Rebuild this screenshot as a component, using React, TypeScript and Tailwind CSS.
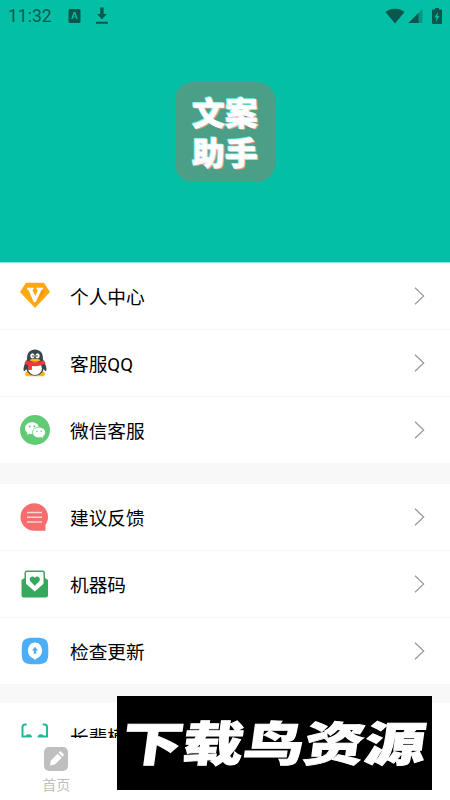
import type { ReactNode } from "react";

/* Status bar glyphs */

function StatusBar() {
  return (
    <div className="flex h-8 items-center justify-between pl-2 pr-2 text-[#0b574d]">
      <div className="flex items-center">
        <span className="w-[60px] font-[Roboto,sans-serif] text-[17.500px] leading-8">11:32</span>
        <svg width="13" height="14" viewBox="0 0 13 14" fill="currentColor">
          <path
            fillRule="evenodd"
            d="M2 0h9a1.500 1.500 0 0 1 1.500 1.500v11A1.500 1.500 0 0 1 11 14H2A1.500 1.500 0 0 1 .5 12.500v-11A1.500 1.500 0 0 1 2 0ZM5.600 3 3.200 10h1.400l.5-1.500h2.800L8.400 10h1.400L7.400 3ZM6.500 4.600l.9 2.800H5.600Z"
          />
        </svg>
        <svg className="ml-[14px]" width="14" height="18" viewBox="0 0 14 18" fill="currentColor">
          <path d="M5.200 .5h3.400v6.500h3.200L7 12.500 2.200 7h3ZM1 14.800h12v1.900H1Z" />
        </svg>
      </div>
      <div className="flex items-center">
        <svg width="20" height="16" viewBox="0 0 20 16" fill="currentColor">
          <path d="M10 15.500.5 4C5.500-.5 14.500-.5 19.500 4Z" />
        </svg>
        <svg className="ml-[3px]" width="15" height="14" viewBox="0 0 15 14" fill="currentColor">
          <path d="M14.500 0v14H.5Z" opacity=".4" />
          <path d="M10.500 4v10H.5Z" />
        </svg>
        <svg className="ml-[9px]" width="10" height="16" viewBox="0 0 10 16">
          <path fill="currentColor" d="M3 0h4v1.500h2A1 1 0 0 1 10 2.500V15a1 1 0 0 1-1 1H1a1 1 0 0 1-1-1V2.500a1 1 0 0 1 1-1h2Z" />
          <path fill="#02bfa6" d="M6 4 2.500 9.500h2L3.800 14l3.700-6h-2Z" />
        </svg>
      </div>
    </div>
  );
}

/* Row icons */

function VipIcon() {
  return (
    <svg width="30" height="30" viewBox="0 0 30 30">
      <path fill="#ffa70f" d="M6 1.800h18l6 9.200-15 16L0 11Z" />
      <path fill="#f28c0c" d="m22.300 8 2.700 3L15 23l-1-3Z" opacity=".6" />
      <path
        fill="#fff"
        d="M7 6.800h6.500v1.500l-1.200.5 3 6.200 2.700-6-1.500-.7V6.800H23v1.500l-1.600.7-5.600 12.200h-2L8.500 9 7 8.300Z"
      />
    </svg>
  );
}

function QQIcon() {
  return (
    <svg width="30" height="30" viewBox="0 0 30 30">
      <path fill="#ffb711" d="M8.500 23c-4 .5-5 4.800-1 5.200h15c4-.4 3-4.700-1-5.200Z" />
      <path
        fill="#37464f"
        d="M15 1.500c-5 0-7.900 3.600-7.900 8.200 0 1.600-.2 2.500-1.100 4-1.700 2.800-2.900 6.300-2.400 8.800.3 1.300 1.700.1 2.700-1.500C7.500 25.500 11 27.500 15 27.500s7.500-2 8.700-6.500c1 1.600 2.400 2.800 2.700 1.500.5-2.500-.7-6-2.400-8.800-.9-1.500-1.100-2.400-1.100-4 0-4.600-2.900-8.200-7.900-8.200Z"
      />
      <ellipse cx="15" cy="20.500" rx="7" ry="6.500" fill="#fff" />
      <path fill="#eb3a3b" d="M6 12.300c5 2.600 13 2.600 18 0l1.600 3.200c-4.100 2.200-8.900 3-13.600 2.500l-.2 4H7.800l.2-5c-1.300-.4-2.400-.9-3.600-1.600Z" />
      <ellipse cx="12.400" cy="7.800" rx="2.100" ry="2.600" fill="#fff" />
      <ellipse cx="17.600" cy="7.800" rx="2.100" ry="2.600" fill="#fff" />
      <circle cx="13" cy="8" r=".8" fill="#263238" />
      <circle cx="17" cy="8" r=".8" fill="#263238" />
      <path fill="#ffb711" d="M9.500 12.200c2.500-1.800 8.500-1.800 11 0-2.500 2.100-8.500 2.100-11 0Z" />
    </svg>
  );
}

function WechatIcon() {
  return (
    <svg width="30" height="30" viewBox="0 0 30 30">
      <circle cx="15" cy="15" r="15" fill="#60ca75" />
      <path fill="#fff" d="M12 7.300c-4 0-7 2.700-7 6 0 1.900 1 3.500 2.600 4.600L7 20l2.500-1.300c.8.200 1.600.3 2.500.3 3.900 0 7-2.500 7-5.800s-3.100-5.900-7-5.900Z" />
      <path
        fill="#fff"
        stroke="#60ca75"
        strokeWidth=".8"
        d="M19 12.200c-3.600 0-6.500 2.300-6.500 5.300s2.900 5.400 6.500 5.400c.8 0 1.500-.1 2.200-.3l2.300 1.200-.6-2c1.600-1 2.600-2.500 2.600-4.300 0-3-2.900-5.300-6.500-5.300Z"
      />
      <g fill="#60ca75">
        <circle cx="9.700" cy="11.500" r="1" />
        <circle cx="14.300" cy="11.500" r="1" />
        <circle cx="17" cy="16.200" r=".8" />
        <circle cx="21.200" cy="16.200" r=".8" />
      </g>
    </svg>
  );
}

function FeedbackIcon() {
  return (
    <svg width="30" height="30" viewBox="0 0 30 30">
      <path fill="#f66d6d" d="M14.300 1.200a13.700 13.700 0 0 1 13.700 13.700c0 3-1 5.500-2.500 7.800L25.500 28c0 .5-.3.800-.8.800H14.300a13.800 13.800 0 0 1 0-27.600Z" />
      <path stroke="#ffd4d4" strokeWidth="1.600" d="M7 10.500h15M7 15.300h15M7 20h15" />
    </svg>
  );
}

function MachineIcon() {
  return (
    <svg width="30" height="30" viewBox="0 0 30 30">
      <path
        fill="#37a95f"
        d="M6.500 1.500h16a2.500 2.500 0 0 1 2.500 2.500v5l3 2v15.500a2 2 0 0 1-2 2H3.500a2 2 0 0 1-2-2V11l3-2V4a2.500 2.500 0 0 1 2-2.500Z"
      />
      <path fill="#fff" d="M7.500 3h14.800a1.200 1.200 0 0 1 1.200 1.200v10.500L14.800 22.500 6 14.700V4.200A1.200 1.200 0 0 1 7.500 3Z" />
      <path fill="#37a95f" d="M14.800 16.700 10.500 12.500c-1.500-1.600-.7-4.900 1.900-4.900 1.200 0 1.900.6 2.400 1.200.5-.6 1.200-1.200 2.400-1.200 2.600 0 3.400 3.300 1.900 4.900Z" />
    </svg>
  );
}

function UpdateIcon() {
  return (
    <svg width="30" height="30" viewBox="0 0 30 30">
      <path fill="#4daef8" d="M15 1.700c11.500 0 13.300 1.800 13.300 13.300S26.500 28.300 15 28.300 1.700 26.500 1.700 15 3.500 1.700 15 1.700Z" />
      <path fill="#fff" d="M15 6.500c4 0 7 3.300 7 8 0 4.200-2.500 7-5.200 7.800L15 24l-1.800-1.700C10.500 21.500 8 18.700 8 14.500c0-4.700 3-8 7-8Z" />
      <path fill="#4daef8" d="m15 10.800 3 3.700h-1.800v3.200h-2.400v-3.200H12Z" />
    </svg>
  );
}

function ElderIcon() {
  return (
    <svg width="30" height="30" viewBox="0 0 30 30" fill="none" stroke="#20b99c" strokeWidth="2" strokeLinecap="round">
      <path d="M6 3.500H5A2.500 2.500 0 0 0 2.500 6v9.500h8.500M23.500 3.500h1A2.500 2.500 0 0 1 27 6v9.500h-8.500M6.500 15c1.500-1.200 3.500-1 4.500.5M23 15c-1.500-1.200-3.500-1-4.500.5" />
    </svg>
  );
}

function Row({ icon, label }: { icon: ReactNode; label: string }) {
  return (
    <div className="flex h-[67px] shrink-0 items-center border-b border-[#f7f7f7] bg-white pl-5 pr-[25px] last:h-[66px] last:border-b-0">
      <span className="flex w-[50px]">{icon}</span>
      <span className="flex-1 whitespace-nowrap pt-[3px] text-[18.700px] leading-7 text-black">{label}</span>
      <svg width="11" height="18" viewBox="0 0 11 18" fill="none" stroke="#999" strokeWidth="1.200">
        <path d="m1 .8 8.700 8.200L1 17.200" />
      </svg>
    </div>
  );
}

function TabBar() {
  return (
    <nav className="grid h-[62px] grid-cols-4 bg-white text-[14px] leading-5 text-[#bfbfbf]">
      <div className="flex flex-col items-center pt-[9px]">
        <svg width="24" height="24" viewBox="0 0 24 24">
          <rect width="24" height="24" rx="5" fill="#bfbfbf" />
          <path fill="#fff" d="m6 18.500.8-5 6.800-6.700 4 4-6.800 6.700ZM14.500 5.800l1-1c.6-.6 1.200-.6 1.800 0l2.100 2.100c.6.600.6 1.200 0 1.800l-1 1Z" />
        </svg>
        <span className="mt-[4px]">首页</span>
      </div>
      <div className="flex flex-col items-center pt-[34px]">发现</div>
      <div className="flex flex-col items-center pt-[34px]">我的</div>
    </nav>
  );
}

export default function App() {
  return (
    <div className="relative flex h-[800px] w-[450px] flex-col overflow-hidden bg-[#f8f8f8] font-[Roboto,'Noto_Sans_CJK_SC',sans-serif]">
      <header className="h-[263px] shrink-0 border-b border-[#8fe0d5] bg-[#02bfa6]">
        <StatusBar />
        <div className="mx-auto mt-[50px] flex h-[100px] w-[100px] flex-col items-center justify-center rounded-[18px] bg-[#4c9f87] font-['Noto_Sans_CJK_SC',sans-serif] text-[33px] font-black leading-[40px] text-white [-webkit-text-stroke:0.5px_white] [text-shadow:-1px_-1px_0_#73eee5,1px_1px_0_#ed9b83]">
          <span className="scale-y-[0.950]">文案</span>
          <span className="scale-y-[0.950]">助手</span>
        </div>
      </header>

      <main className="flex h-[475px] shrink-0 flex-col overflow-hidden">
        <section className="shrink-0">
          <Row icon={<VipIcon />} label="个人中心" />
          <Row icon={<QQIcon />} label="客服QQ" />
          <Row icon={<WechatIcon />} label="微信客服" />
        </section>
        <section className="mt-[21px] shrink-0">
          <Row icon={<FeedbackIcon />} label="建议反馈" />
          <Row icon={<MachineIcon />} label="机器码" />
          <Row icon={<UpdateIcon />} label="检查更新" />
        </section>
        <section className="mt-[19px] shrink-0">
          <Row icon={<ElderIcon />} label="长辈模式" />
        </section>
      </main>

      <TabBar />

      {/* Banner floating over the list and the tab bar */}
      <div className="absolute left-[117px] top-[696px] flex h-[94px] w-[315px] items-center justify-center bg-black pb-[6px]">
        <span className="-skew-x-6 scale-x-[1.290] whitespace-nowrap font-['Noto_Sans_CJK_SC',sans-serif] text-[47px] font-black leading-none text-white [-webkit-text-stroke:1px_white]">
          下载鸟资源
        </span>
      </div>
    </div>
  );
}
